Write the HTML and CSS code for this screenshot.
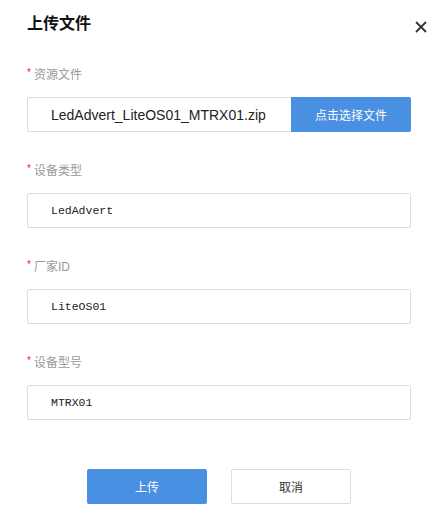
FILE: index.html
```html
<!DOCTYPE html>
<html lang="zh">
<head>
<meta charset="utf-8">
<link rel="stylesheet" href="styles.css">
</head>
<body>
<div class="dialog">
  <div class="header">
    <h1 class="title">上传文件</h1>
    <span class="close" aria-label="close">
      <svg width="12" height="12" viewBox="0 0 12 12"><path d="M1 1L11 11M11 1L1 11" stroke="#333" stroke-width="1.8" fill="none"/></svg>
    </span>
  </div>
  <div class="form">
    <div class="field">
      <div class="label"><span class="star">*</span>资源文件</div>
      <div class="file-row">
        <div class="file-name">LedAdvert_LiteOS01_MTRX01.zip</div>
        <div class="file-btn">点击选择文件</div>
      </div>
    </div>
    <div class="field">
      <div class="label"><span class="star">*</span>设备类型</div>
      <div class="input">LedAdvert</div>
    </div>
    <div class="field">
      <div class="label"><span class="star">*</span>厂家ID</div>
      <div class="input">LiteOS01</div>
    </div>
    <div class="field">
      <div class="label"><span class="star">*</span>设备型号</div>
      <div class="input">MTRX01</div>
    </div>
  </div>
  <div class="actions">
    <button class="btn btn-primary">上传</button>
    <button class="btn btn-default">取消</button>
  </div>
</div>
</body>
</html>
```
FILE: styles.css
```css
html, body {
  margin: 0;
  padding: 0;
  background: #fff;
}
body {
  font-family: "Liberation Sans", "Noto Sans CJK SC", sans-serif;
  color: #333;
}
.dialog {
  width: 447px;
  height: 514px;
  box-sizing: border-box;
  padding: 0 36px 0 27px;
}
.header {
  display: flex;
  justify-content: space-between;
  align-items: center;
  height: 50px;
  margin-right: -16px;
}
.title {
  margin: 0;
  font-size: 16px;
  font-weight: bold;
  color: #111;
  line-height: 20px;
  margin-top: -2px;
}
.close {
  display: flex;
  margin-top: 4px;
}
.form {
  display: flex;
  flex-direction: column;
  gap: 30px;
  margin-top: 16px;
}
.field {
  display: flex;
  flex-direction: column;
  gap: 13px;
}
.label {
  font-size: 12px;
  line-height: 18px;
  color: #999;
  display: flex;
  align-items: center;
}
.star {
  color: #f5222d;
  font-size: 10px;
  margin-right: 3px;
  margin-top: -4px;
}
.file-row {
  display: flex;
  height: 35px;
}
.file-name {
  flex: 1;
  border: 1px solid #ddd;
  border-right: none;
  border-radius: 2px 0 0 2px;
  box-sizing: border-box;
  padding-left: 23px;
  display: flex;
  align-items: center;
  font-size: 14px;
  color: #222;
}
.file-btn {
  width: 120px;
  background: #4a90e2;
  color: #fff;
  font-size: 12px;
  display: flex;
  align-items: center;
  justify-content: center;
  border-radius: 0 2px 2px 0;
}
.input {
  height: 35px;
  box-sizing: border-box;
  border: 1px solid #ddd;
  border-radius: 2px;
  padding-left: 23px;
  display: flex;
  align-items: center;
  font-family: "Liberation Mono", monospace;
  font-size: 11.5px;
  color: #222;
}
.actions {
  display: flex;
  justify-content: center;
  gap: 24px;
  margin-top: 49px;
}
.btn {
  width: 120px;
  height: 35px;
  border-radius: 2px;
  font-family: "Liberation Sans", "Noto Sans CJK SC", sans-serif;
  font-size: 12px;
  cursor: pointer;
}
.btn-primary {
  background: #4a90e2;
  border: none;
  color: #fff;
}
.btn-default {
  background: #fff;
  border: 1px solid #ddd;
  color: #333;
}
```
